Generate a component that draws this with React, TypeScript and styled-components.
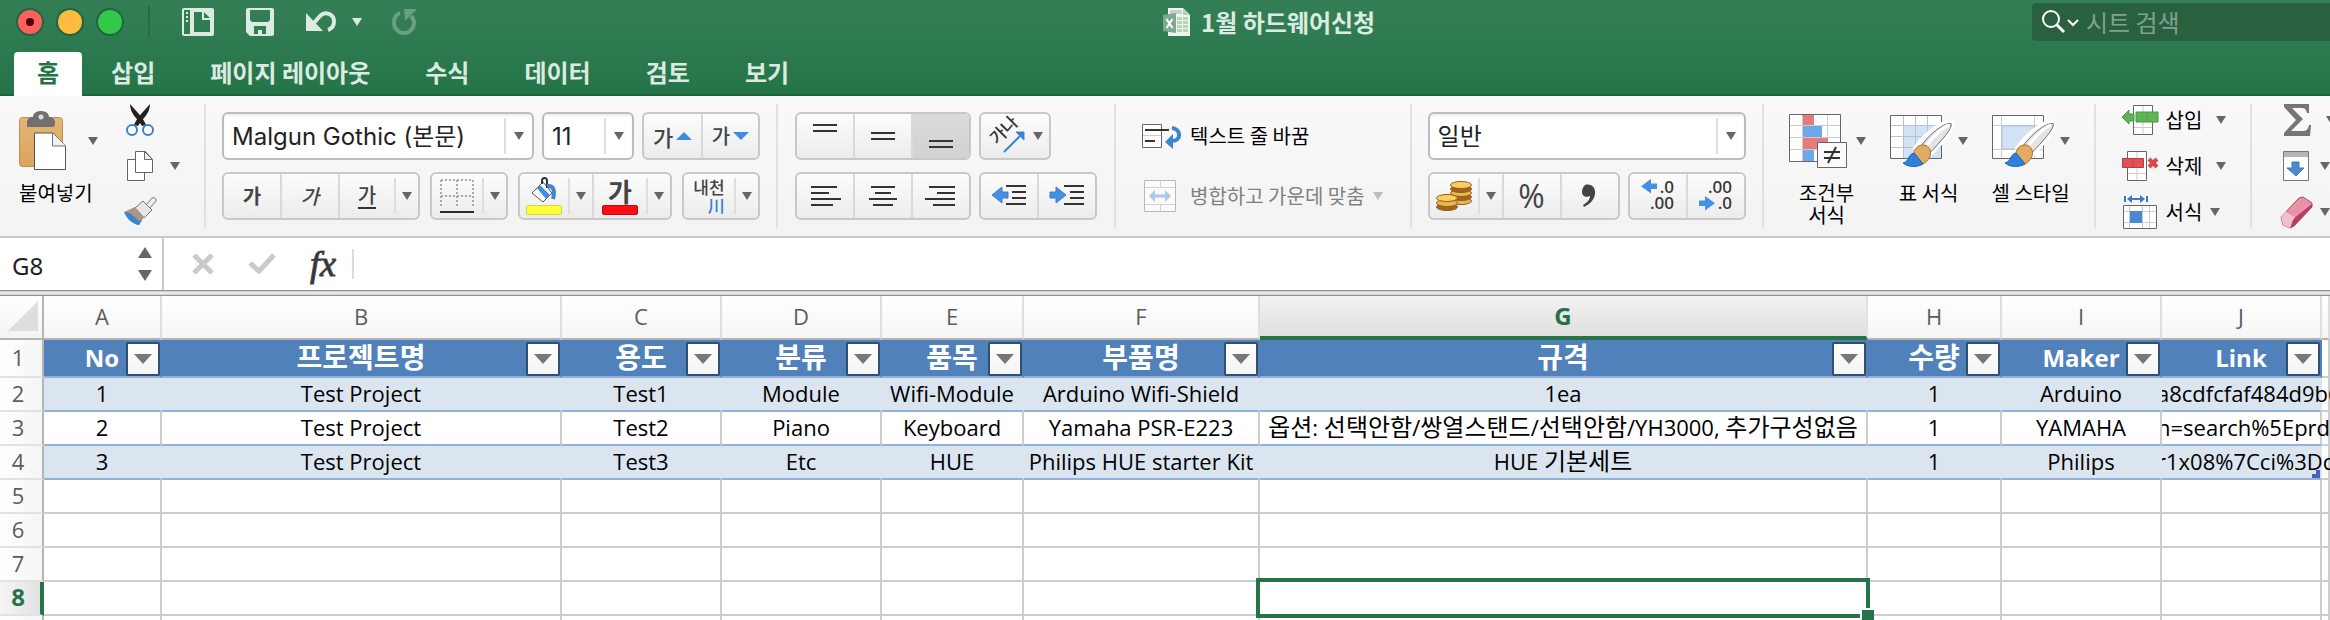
import React from "react";
import styled, { createGlobalStyle, css } from "styled-components";

const GlobalStyle = createGlobalStyle`
  *, *::before, *::after { box-sizing: border-box; }
  body { margin: 0; background: #fff; }
  button, input, select { font: inherit; color: inherit; margin: 0; }
  svg { flex-shrink: 0; overflow: visible; }
`;

const uiFont = `Inter, "Noto Sans CJK KR", sans-serif`;
const koFont = `"Noto Sans CJK KR", sans-serif`;
const cellFont = `"Open Sans", "Noto Sans CJK KR", sans-serif`;

/* ---------- window ---------- */

const Window = styled.div`
  display: flex;
  flex-direction: column;
  height: 100vh;
  overflow: hidden;
  font-family: ${koFont};
  color: #000;
`;

const plainButton = css`
  border: 0;
  padding: 0;
  background: none;
  display: flex;
  align-items: center;
  flex-shrink: 0;
  white-space: nowrap;
`;

const Row = styled.div<{ $gap?: number }>`
  display: flex;
  align-items: center;
  gap: ${(p) => p.$gap ?? 0}px;
`;

/* ---------- title bar ---------- */

const Header = styled.header`
  flex-shrink: 0;
  background: linear-gradient(#357f57, #257448);
  border-bottom: 2px solid #1f633c;
  color: #dcebe2;
`;

const TitleRow = styled.div`
  display: flex;
  align-items: center;
  height: 44px;
`;

const Tools = styled.div`
  flex: 1;
  display: flex;
  align-items: center;
  padding-left: 18px;
`;

const Light = styled.button<{ $color: string }>`
  ${plainButton}
  justify-content: center;
  width: 24px;
  height: 24px;
  margin-right: 16px;
  border-radius: 50%;
  background: ${(p) => p.$color};
  box-shadow: 0 0 0 2px rgba(20, 70, 40, 0.45);
`;

const LightDot = styled.span`
  width: 8px;
  height: 8px;
  border-radius: 50%;
  background: #4d0000;
`;

const TitleDivider = styled.span`
  width: 2px;
  height: 32px;
  margin: 0 32px 0 10px;
  background: #2a6b46;
`;

const ToolButton = styled.button<{ $after: number }>`
  ${plainButton}
  margin-right: ${(p) => p.$after}px;
`;

const DocTitle = styled.h1`
  display: flex;
  align-items: center;
  gap: 10px;
  width: 869px;
  margin: 0;
  font-size: 24px;
  line-height: 32px;
  font-weight: 700;
`;

const SearchBox = styled.label`
  display: flex;
  align-items: center;
  gap: 8px;
  width: 298px;
  height: 38px;
  padding-left: 10px;
  border-radius: 4px 0 0 4px;
  background: #29603f;
`;

const SearchInput = styled.input`
  flex: 1;
  min-width: 0;
  border: 0;
  padding: 0;
  background: none;
  font-size: 24px;
  line-height: 32px;
  &::placeholder { color: #7fa38d; opacity: 1; }
`;

const Tabs = styled.nav`
  display: flex;
  gap: 1px;
  height: 42px;
  margin-top: 8px;
  padding-left: 14px;
`;

const Tab = styled.button<{ $active?: boolean }>`
  ${plainButton}
  padding: 0 ${(p) => (p.$active ? 23 : 27)}px 3px;
  margin-right: ${(p) => (p.$active ? 1 : 0)}px;
  font-size: 24px;
  line-height: 36px;
  font-weight: 700;
  ${(p) =>
    p.$active &&
    css`
      height: 44px;
      padding-bottom: 5px;
      border-radius: 4px 4px 0 0;
      background: #fff;
      color: #257448;
    `}
`;

/* ---------- ribbon ---------- */

const Ribbon = styled.div`
  flex-shrink: 0;
  display: flex;
  overflow: hidden;
  height: 142px;
  padding: 8px 0;
  border-bottom: 2px solid #c9c9c9;
  background: linear-gradient(#f9f9f9, #f3f3f3);
`;

const Group = styled.div<{ $l: number; $r: number; $gap?: number }>`
  flex-shrink: 0;
  display: flex;
  gap: ${(p) => p.$gap ?? 0}px;
  padding: 0 ${(p) => p.$r}px 0 ${(p) => p.$l}px;
  border-right: 2px solid #e1e1e1;
  height: 124px;
  &:last-child { border-right: 0; }
`;

const Stack = styled.div`
  display: flex;
  flex-direction: column;
  gap: 12px;
  padding-top: 8px;
`;

const Triple = styled.div`
  display: flex;
  flex-direction: column;
  justify-content: space-between;
`;

const SmallCommand = styled.button<{ $gap?: number }>`
  ${plainButton}
  height: 32px;
  font-size: 20px;
  line-height: 24px;
  gap: ${(p) => p.$gap ?? 14}px;
`;

const IconLabel = styled.span`
  display: flex;
  align-items: center;
  gap: 8px;
`;

const BigCommand = styled.button<{ $w: number }>`
  ${plainButton}
  flex-direction: column;
  width: ${(p) => p.$w}px;
  padding-top: 6px;
  font-size: 20px;
  line-height: 22px;
`;

const BigArt = styled.span`
  display: flex;
  align-items: center;
  justify-content: space-between;
  width: 100%;
  height: 62px;
  margin-bottom: 10px;
`;

const PasteLabel = styled.span`
  align-self: flex-start;
`;

const WideCommand = styled.button<{ $off?: boolean }>`
  ${plainButton}
  height: 48px;
  font-size: 20px;
  line-height: 24px;
  gap: 8px;
  color: ${(p) => (p.$off ? "#808080" : "#000")};
`;

const Combo = styled.label<{ $w: number }>`
  display: flex;
  align-items: center;
  width: ${(p) => p.$w}px;
  height: 48px;
  padding-right: 8px;
  border: 2px solid #bdbdbd;
  border-radius: 6px;
  background: #fff;
  box-shadow: inset 0 2px 2px #eee;
`;

const Select = styled.select`
  appearance: none;
  flex: 1;
  min-width: 0;
  height: 36px;
  padding: 0 0 0 8px;
  border: 0;
  background: none;
  font-family: ${uiFont};
  font-size: 24px;
  color: #222;
`;

const Split = styled.span`
  width: 2px;
  height: 36px;
  background: #dedede;
`;

const ComboCaret = styled.span`
  display: flex;
  padding-left: 8px;
`;

const Buttons = styled.div`
  display: flex;
  height: 48px;
  border: 2px solid #c8c8c8;
  border-radius: 6px;
  background: linear-gradient(#fcfcfc, #ececec);
  overflow: hidden;
`;

const Btn = styled.button<{ $w: number; $on?: boolean }>`
  ${plainButton}
  justify-content: center;
  width: ${(p) => p.$w}px;
  font-size: 20px;
  line-height: 24px;
  font-weight: 700;
  color: #444;
  background: ${(p) => (p.$on ? "linear-gradient(#dadada, #d2d2d2)" : "none")};
  & + & { border-left: 2px solid #d9d9d9; }
`;

const BtnFace = styled.span`
  flex: 1;
  display: flex;
  justify-content: center;
`;

const BtnCaret = styled.span`
  display: flex;
  padding: 0 6px;
`;

const SizeGlyph = styled.span<{ $big?: boolean }>`
  font-size: ${(p) => (p.$big ? 22 : 20)}px;
  font-weight: 500;
`;

const Slanted = styled.span`
  font-weight: 500;
  font-style: italic;
`;

const Underlined = styled.span`
  font-weight: 500;
  border-bottom: 2px solid #333;
`;

const SwatchFace = styled.span`
  display: flex;
  flex-direction: column;
  align-items: center;
  font-size: 26px;
  line-height: 28px;
`;

const Swatch = styled.span<{ $color: string; $edge: string }>`
  width: 36px;
  height: 10px;
  border: 1px solid ${(p) => p.$edge};
  border-radius: 2px;
  background: ${(p) => p.$color};
`;

const Phonetic = styled.span`
  display: flex;
  flex-direction: column;
  font-size: 17px;
  line-height: 18px;
  font-weight: 500;
  text-align: right;
`;

const Blue = styled.span`
  color: #2f7fd4;
`;

const Percent = styled.span`
  font-family: "Open Sans", sans-serif;
  font-size: 32px;
  font-weight: 400;
`;

const Comma = styled.span`
  display: flex;
`;

/* ---------- formula bar ---------- */

const FormulaBar = styled.div`
  flex-shrink: 0;
  display: flex;
  align-items: center;
  height: 52px;
  background: #fff;
`;

const NameBox = styled.div`
  display: flex;
  align-items: center;
  width: 164px;
  height: 52px;
  padding: 0 10px 0 12px;
  border-right: 2px solid #c9c9c9;
`;

const BarInput = styled.input`
  flex: 1;
  min-width: 0;
  height: 40px;
  padding: 2px 0 0;
  border: 0;
  background: none;
  font-family: "Noto Sans", sans-serif;
  font-size: 24px;
  color: #222;
  outline: none;
`;

const Stepper = styled.div`
  display: flex;
  flex-direction: column;
  gap: 12px;
`;

const BarButton = styled.button<{ $before: number }>`
  ${plainButton}
  margin-left: ${(p) => p.$before}px;
`;

const Fx = styled.span`
  font-family: "Liberation Serif", serif;
  font-style: italic;
  font-weight: 400;
  font-size: 36px;
  line-height: 36px;
  color: #333;
  -webkit-text-stroke: 1px #444;
`;

const BarDivider = styled.span`
  width: 2px;
  height: 30px;
  margin: 0 12px 0 16px;
  background: #dcdcdc;
`;

const SheetEdge = styled.div`
  flex-shrink: 0;
  height: 6px;
  border-top: 1px solid #949494;
  border-bottom: 1px solid #949494;
  background: linear-gradient(#c4c4c4, #f4f4f4, #c8c8c8);
`;

/* ---------- sheet ---------- */

const SheetArea = styled.main`
  flex: 1;
  min-height: 0;
  overflow: hidden;
`;

const Sheet = styled.table`
  width: 100%;
  table-layout: fixed;
  border-collapse: separate;
  border-spacing: 0;
  font-family: ${cellFont};
  font-size: 22px;
  line-height: 30px;
  white-space: nowrap;
`;

const Corner = styled.td`
  height: 44px;
  padding: 4px 4px 0 8px;
  border-right: 2px solid #b4b4b4;
  border-bottom: 2px solid #b4b4b4;
  background: linear-gradient(#fff, #f3f3f3);
`;

const ColHead = styled.th<{ $on: boolean }>`
  height: 44px;
  padding: 0 0 2px;
  border-right: 2px solid ${(p) => (p.$on ? "#e2e2e2" : "#dedede")};
  border-bottom: 2px solid #b4b4b4;
  background: linear-gradient(#fff, #f5f5f5);
  font-weight: 400;
  color: #5c5c5c;
  ${(p) =>
    p.$on &&
    css`
      padding-bottom: 0;
      border-bottom: 4px solid #257448;
      background: linear-gradient(#f3f3f3, #dfdfdf);
      font-size: 24px;
      font-weight: 700;
      color: #257448;
    `}
`;

const RowHead = styled.th<{ $on: boolean }>`
  padding: 0 6px 2px 0;
  border-right: 2px solid #b4b4b4;
  border-bottom: 2px solid #e2e2e2;
  background: linear-gradient(90deg, #fff, #f5f5f5);
  font-weight: 400;
  color: #5c5c5c;
  ${(p) =>
    p.$on &&
    css`
      padding-right: 4px;
      border-right: 4px solid #257448;
      background: linear-gradient(90deg, #f5f5f5, #e2e2e2);
      font-size: 24px;
      font-weight: 700;
      color: #257448;
    `}
`;

type Tone = "head" | "band" | "plain" | "empty";
const fills: Record<Tone, string> = {
  head: "#5081bb",
  band: "#dbe5f0",
  plain: "#fff",
  empty: "#fff",
};

const Cell = styled.td<{ $tone: Tone }>`
  position: relative;
  height: ${(p) => (p.$tone === "head" ? 38 : 34)}px;
  padding: 0 0 2px;
  text-align: center;
  background: ${(p) => fills[p.$tone]};
  border-right: 2px solid ${(p) => (p.$tone === "plain" || p.$tone === "empty" ? "#cdcdcd" : fills[p.$tone])};
  border-bottom: 2px solid ${(p) => (p.$tone === "empty" ? "#cdcdcd" : "#93b2d9")};
  ${(p) =>
    p.$tone === "head" &&
    css`
      padding: 0;
      font-size: 24px;
      font-weight: 700;
      color: #fff;
    `}
`;

/* Hangul runs are set slightly larger than the Latin beside them */
const Hangul = styled.span<{ $head?: boolean }>`
  font-family: ${koFont};
  font-size: ${(p) => (p.$head ? 28 : 24)}px;
  line-height: 28px;
`;

const Spill = styled.div`
  overflow: hidden;
  position: relative;
  z-index: 1;
  width: 168px;
  text-align: left;
  text-indent: -5px;
`;

const FilterButton = styled.button`
  ${plainButton}
  position: absolute;
  right: 0;
  top: 2px;
  justify-content: center;
  width: 34px;
  height: 34px;
  border: 2px solid #30506f;
  border-radius: 2px;
  background: linear-gradient(#fff, #f3f3f3);
`;

const TableCorner = styled.svg`
  position: absolute;
  right: 0;
  bottom: 0;
  z-index: 2;
`;

const Selection = styled.div`
  position: absolute;
  inset: -4px;
  z-index: 3;
  border: 4px solid #257448;
`;

const FillHandle = styled.span`
  position: absolute;
  right: -8px;
  bottom: -8px;
  width: 14px;
  height: 14px;
  border: 2px solid #fff;
  border-right: 0;
  background: #257448;
`;

/* ---------- drawings ---------- */

const Caret = ({ color = "#666", w = 10, h = 8, up = false }: { color?: string; w?: number; h?: number; up?: boolean }) => (
  <svg width={w} height={h} viewBox="0 0 10 8" preserveAspectRatio="none">
    <path d={up ? "M0 8h10L5 0z" : "M0 0h10L5 8z"} fill={color} />
  </svg>
);

const PaneIcon = () => (
  <svg width="32" height="28" fill="#dcebe2">
    <path fillRule="evenodd" d="M2 0h28a2 2 0 0 1 2 2v24a2 2 0 0 1-2 2H2a2 2 0 0 1-2-2V2a2 2 0 0 1 2-2zM2 2v24h6V2zM12 4v20h16V12h-8V4zM22 4v6h6z" />
    <path d="M4 4h2v2H4zM4 8h2v2H4zM4 12h2v2H4z" />
  </svg>
);

const SaveIcon = () => (
  <svg width="28" height="28">
    <path fill="#dcebe2" fillRule="evenodd" d="M2 0h24a2 2 0 0 1 2 2v24a2 2 0 0 1-2 2H4l-4-4V2a2 2 0 0 1 2-2zM4 2v10l2 2h16l2-2V2zM8 18v8h4v-4h4v4h4v-8z" />
  </svg>
);

const UndoIcon = () => (
  <svg width="30" height="22" fill="none">
    <path d="M0 2v18h17z" fill="#dcebe2" />
    <path d="M7 13L14 5C20-1 28 4 28 10c0 5-3 8-6 9" stroke="#dcebe2" strokeWidth="4" />
  </svg>
);

const RedoIcon = () => (
  <svg width="26" height="28" fill="none">
    <path d="M8 5C3 7 2 11 2 15a10 10 0 0 0 20 0c0-3-1-5-3-7" stroke="#6b9f82" strokeWidth="4" />
    <path d="M12 1h13L13 13z" fill="#6b9f82" />
  </svg>
);

const BookIcon = () => (
  <svg width="28" height="28">
    <path d="M5 0h15l7 7v21H5z" fill="#eef5f0" />
    <path d="M7 2h12v4H7z" fill="#c9cfca" />
    <path d="M20 0v7h7z" fill="#b8cdbf" />
    <path d="M14 9h5v3h-5zM20 9h5v3h-5zM14 13h5v3h-5zM20 13h5v3h-5zM14 17h5v3h-5zM20 17h5v3h-5zM14 21h5v3h-5zM20 21h5v3h-5z" fill="#b5d8b4" />
    <path d="M0 7l13-2v20L0 23z" fill="#7daa8f" />
    <path d="M3.500 11l6 9M9.500 11l-6 9" stroke="#fff" strokeWidth="2" />
  </svg>
);

const SearchIcon = () => (
  <svg width="36" height="24" fill="none" stroke="#fff" strokeWidth="2">
    <circle cx="9" cy="9" r="8" />
    <path d="M15 15l7 7" strokeWidth="3" />
    <path d="M26 10l5 5 5-5" />
  </svg>
);

const PasteIcon = () => (
  <svg width="48" height="60">
    <defs>
      <linearGradient id="board" x2="0" y2="1">
        <stop stopColor="#e4b573" />
        <stop offset="1" stopColor="#d9a55f" />
      </linearGradient>
    </defs>
    <rect x="0.500" y="6.500" width="43" height="49" rx="3" fill="url(#board)" stroke="#c08f52" />
    <path d="M8 16v-5c0-3 3-5 6-5 0-4 4-6 8-6s8 2 8 6c3 0 6 2 6 5v2c0 2-1 3-3 3z" fill="#707070" />
    <circle cx="22" cy="6" r="2.500" fill="#e9dcc6" />
    <path d="M15.500 22H34l12.500 13v23.500h-31z" fill="#fff" stroke="#555" />
    <path d="M33.500 22v13h13" fill="#f0f0f0" stroke="#777" />
  </svg>
);

const CutIcon = () => (
  <svg width="32" height="32">
    <path d="M6 0c5 6 13 13 16 21l-4 1C14 15 6 10 6 0z" fill="#222" />
    <path d="M26 0c-5 6-13 13-16 21l4 1C18 15 26 10 26 0z" fill="#222" />
    <circle cx="8" cy="26" r="5" fill="#fff" stroke="#3a80cf" strokeWidth="2" />
    <circle cx="24" cy="26" r="5" fill="#fff" stroke="#3a80cf" strokeWidth="2" />
  </svg>
);

const CopyIcon = () => (
  <svg width="32" height="32" stroke="#666" fill="#fff">
    <path d="M3.500 9.500h17v21h-17z" />
    <path d="M11.500 1.500h10l7 8v13h-17z" />
    <path d="M20.500 1.500v8h8z" fill="#eee" />
  </svg>
);

const FormatBrushIcon = () => (
  <svg width="32" height="32">
    <path d="M22 9l6-7c3-1 5 1 4 3l-7 8z" fill="#eee" stroke="#777" />
    <path d="M11 12l8-7 9 9-8 8z" fill="#e6e6e6" stroke="#777" />
    <path d="M0 16l11-5 9 10-5 8C9 28 4 23 0 16z" fill="#ab9682" />
    <path d="M0 16l6 1 9 8 3-1-3 5C8 28 3 23 0 16z" fill="#3b82cf" />
  </svg>
);

const BordersIcon = () => (
  <svg width="34" height="34">
    <path d="M1 1h32M1 17h32M1 1v28M17 1v28M33 1v28" stroke="#aaa" strokeWidth="2" strokeDasharray="2 2" />
    <path d="M0 33h34" stroke="#2b2b2b" strokeWidth="2" />
  </svg>
);

const BucketIcon = () => (
  <svg width="26" height="28">
    <path d="M1 16L12 5l9 11-9 9z" fill="#fff" stroke="#555" />
    <path d="M6 11l9 11 4-4L9 8z" fill="#3f8ee0" />
    <path d="M11 7V4c0-4 5-4 5 0v7" fill="none" stroke="#333" strokeWidth="2" />
    <path d="M16 9c7-1 8 5 6 13" fill="none" stroke="#3b85d3" strokeWidth="4" />
  </svg>
);

const Lines = ({ rows }: { rows: [number, number, number][] }) => (
  <svg width="36" height="40" stroke="#333" strokeWidth="2">
    {rows.map(([x, y, w]) => (
      <path key={y} d={`M${x} ${y}h${w}`} />
    ))}
  </svg>
);

const OrientationIcon = () => (
  <svg width="40" height="44">
    <text x="-16" y="6" transform="translate(17 16) rotate(-45)" fontSize="17" fontWeight="500" fill="#333">가나</text>
    <path d="M17 38l16-16" stroke="#3b85d3" strokeWidth="2" />
    <path d="M29 18h8v8z" fill="#3b85d3" stroke="#3b85d3" />
  </svg>
);

const arrowRight = "M0 5h6V0l10 8-10 8v-5H0z";

const IndentIcon = ({ out }: { out?: boolean }) => (
  <svg width="34" height="24">
    <path d={arrowRight} fill="#4590e2" stroke="#3b7fc9" transform={out ? "translate(16 3) scale(-1 1)" : "translate(0 3)"} />
    <path d="M14 2h20M20 8h14M20 14h14M14 20h20" stroke="#333" strokeWidth="2" />
  </svg>
);

const WrapIcon = () => (
  <svg width="40" height="28">
    <path d="M.5 2.500h19v23h-19z" fill="#fff" stroke="#666" />
    <path d="M1 13.500h18" stroke="#ccc" />
    <path d="M3 8h24M3 19h10" stroke="#333" strokeWidth="2" />
    <path d="M30 6c9 1 10 13 0 13" stroke="#3b85d3" strokeWidth="4" fill="none" />
    <path d="M31 12v15l-8-7z" fill="#3b85d3" />
  </svg>
);

const MergeIcon = () => (
  <svg width="40" height="32">
    <path d="M2.500.5h31v31h-31z" fill="#fafafa" stroke="#b9b9b9" />
    <path d="M3 7.500h30M3 24.500h30M18.500 1v6M18.500 25v6" stroke="#d5d5d5" />
    <path d="M10 16h16" stroke="#a9c9ec" strokeWidth="3" />
    <path d="M13 10v12l-6-6zM23 10v12l6-6z" fill="#a9c9ec" />
  </svg>
);

const coins = [[25, 20], [25, 16], [25, 12], [25, 8], [25, 4], [11, 26], [11, 22], [11, 17]];

const CoinsIcon = () => (
  <svg width="36" height="30">
    {coins.map(([x, y], i) => (
      <ellipse key={i} cx={x} cy={y} rx="10.500" ry="3.500" fill={i === 4 || i === 7 ? "#fbd063" : i % 2 ? "#a0641e" : "#e8b84c"} stroke="#94601a" />
    ))}
  </svg>
);

const CommaIcon = () => (
  <svg width="16" height="22">
    <path d="M3 0c7-2 11 4 10 9-1 6-5 10-11 13l-1-2c5-3 7-6 7-9-4 2-8 0-8-4 0-3 1-5 3-7z" fill="#444" />
  </svg>
);

const DecimalIcon = ({ more }: { more?: boolean }) => (
  <svg width="36" height="36" fontFamily="Noto Sans, sans-serif" fontSize="17" fontWeight="500" fill="#333">
    <text x="34" y="15" textAnchor="end">{more ? ".0" : ".00"}</text>
    <text x="34" y="31" textAnchor="end">{more ? ".00" : ".0"}</text>
    <path d={arrowRight} fill="#4590e2" transform={more ? "translate(17 1) scale(-1 .9)" : "translate(1 18) scale(1 .9)"} />
  </svg>
);

const ConditionalIcon = () => (
  <svg width="60" height="56">
    <path d="M1.500 1.500h51v47h-51z" fill="#fff" stroke="#666" />
    <path d="M2 12.500h50M2 24.500h50M2 36.500h50M14.500 2v46M39.500 2v46" stroke="#ccc" />
    <path d="M15 2h11v10H15zM15 25h25v11H15z" fill="#e47c7c" />
    <path d="M15 13h19v11H15zM15 37h11v11H15z" fill="#6da8e8" />
    <path d="M29.500 29.500h29v25h-29z" fill="#fafafa" stroke="#666" />
    <path d="M36 39h16M36 45h16M48 34l-8 16" stroke="#333" strokeWidth="2" />
  </svg>
);

const PaintBrush = () => (
  <g>
    <path d="M26 34C34 22 50 8 62 8c2 3-6 16-23 33z" fill="#fff" stroke="#fff" strokeWidth="5" />
    <path d="M31 32C38 22 52 9 61 9.500c2 3-6 14-21 29z" fill="#e3e3e3" stroke="#6b6b6b" />
    <path d="M37 31C44 22 53 13 59 11" stroke="#fff" strokeWidth="3" fill="none" />
    <path d="M24 39c1-9 13-11 16-3 2 6-2 11-7 14z" fill="#e2ab63" stroke="#a3722f" />
    <path d="M13 49c6-1 5-9 11-10l9 11c-5 3-14 4-20-1z" fill="#2f80dc" stroke="#2563b0" />
  </g>
);

const TableStyleIcon = () => (
  <svg width="64" height="54">
    <path d="M.5 1.500h51v43H.5z" fill="#fff" stroke="#666" />
    <path d="M14 12h37v32H14z" fill="#d3e3f5" />
    <path d="M1 11.500h50M1 22.500h50M1 33.500h50M13.500 2v42M25.500 2v42M37.500 2v42" stroke="#b9c3cf" />
    <PaintBrush />
  </svg>
);

const CellStyleIcon = () => (
  <svg width="64" height="54">
    <path d="M.5 1.500h51v43H.5z" fill="#fff" stroke="#666" />
    <path d="M1 11.500h50M1 35.500h50M9.500 2v42M42.500 2v42" stroke="#ccc" />
    <path d="M10 12h32v23H10z" fill="#d3e3f5" stroke="#a9c2de" />
    <PaintBrush />
  </svg>
);

const InsertIcon = () => (
  <svg width="36" height="32">
    <path d="M11.500 1.500h19v29h-19z" fill="#fff" stroke="#666" />
    <path d="M21 2v28M12 23.500h18" stroke="#ccc" />
    <path d="M0 13l7-7v4h5v7H7v3z" fill="#5fb455" stroke="#4c9a44" />
    <path d="M14 8h22v10H14z" fill="#5fb455" stroke="#4c9a44" />
    <path d="M25 8v10" stroke="#4c9a44" />
  </svg>
);

const DeleteIcon = () => (
  <svg width="36" height="32">
    <path d="M5.500 1.500h19v29h-19z" fill="#fff" stroke="#666" />
    <path d="M15 2v28M6 23.500h18" stroke="#ccc" />
    <path d="M.5 8.500h21v9H.5z" fill="#df5457" stroke="#b93d40" />
    <path d="M11 9v9" stroke="#b93d40" />
    <path d="M27 9l8 8M35 9l-8 8" stroke="#d9474b" strokeWidth="4" />
  </svg>
);

const FormatIcon = () => (
  <svg width="36" height="34">
    <path d="M1.500 10.500h33v23h-33z" fill="#fff" stroke="#666" />
    <path d="M2 16.500h32M2 27.500h32M7.500 11v22M20.500 11v22M27.500 11v22" stroke="#ccc" />
    <path d="M8 16h12v12H8z" fill="#4a88cf" />
    <path d="M3 1v6M25 1v6" stroke="#3f79bd" strokeWidth="2" />
    <path d="M8 4h12" stroke="#3f79bd" strokeWidth="2" />
    <path d="M10 0v8L5 4zM18 0v8l5-4z" fill="#3f79bd" />
  </svg>
);

const SigmaIcon = () => (
  <svg width="34" height="32">
    <path d="M4 0h25v9h-2c-1-4-2-5-6-5h-9l11 11L11 27h11c5 0 6-2 7-6h2l-1 11H4v-3l12-13L4 3z" fill="#757575" />
  </svg>
);

const FillDownIcon = () => (
  <svg width="34" height="32">
    <path d="M3.500 1.500h25v29h-25z" fill="#fff" stroke="#777" />
    <path d="M4 2h24v5H4z" fill="#b5b5b5" />
    <path d="M12 12h7v6h5l-8 8-9-8h5z" fill="#4a88cf" stroke="#3f79bd" />
  </svg>
);

const EraserIcon = () => (
  <svg width="34" height="34">
    <path d="M1 22L19 3l4-1 9 6v4L14 31l-4 2-7-3z" fill="#ea93a8" stroke="#a84a63" />
    <path d="M10 33l3-9L32 9v3L14 31z" fill="#b5405f" />
    <path d="M1 22l5-6 10 5-3 4-3 8-7-3z" fill="#f4bfcd" />
    <path d="M6 16l10 6" stroke="#d9798f" />
  </svg>
);

/* ---------- data ---------- */

const tabs = ["홈", "삽입", "페이지 레이아웃", "수식", "데이터", "검토", "보기"];
const columns = [
  { id: "A", w: 118 },
  { id: "B", w: 400 },
  { id: "C", w: 160 },
  { id: "D", w: 160 },
  { id: "E", w: 142 },
  { id: "F", w: 236 },
  { id: "G", w: 608 },
  { id: "H", w: 134 },
  { id: "I", w: 160 },
  { id: "J", w: 160 },
];
const records = [
  ["No", "프로젝트명", "용도", "분류", "품목", "부품명", "규격", "수량", "Maker", "Link"],
  ["1", "Test Project", "Test1", "Module", "Wifi-Module", "Arduino Wifi-Shield", "1ea", "1", "Arduino", "a8cdfcfaf484d9b6"],
  ["2", "Test Project", "Test2", "Piano", "Keyboard", "Yamaha PSR-E223", "옵션: 선택안함/쌍열스탠드/선택안함/YH3000, 추가구성없음", "1", "YAMAHA", "n=search%5Eprd4"],
  ["3", "Test Project", "Test3", "Etc", "HUE", "Philips HUE starter Kit", "HUE 기본세트", "1", "Philips", "r1x08%7Cci%3Dd"],
];
const tones: Tone[] = ["head", "band", "plain", "band"];

const CellText = ({ text, head }: { text: string; head?: boolean }) => (
  <>
    {text.split(/([가-힣]+)/).map((run, i) =>
      i % 2 ? <Hangul key={i} $head={head}>{run}</Hangul> : run
    )}
  </>
);

const SplitBtn = ({ w, label, children }: { w: number; label: string; children: React.ReactNode }) => (
  <Btn $w={w} aria-label={label}>
    <BtnFace>{children}</BtnFace>
    <Split />
    <BtnCaret><Caret /></BtnCaret>
  </Btn>
);

const ComboBox = ({ w, label, value }: { w: number; label: string; value: string }) => (
  <Combo $w={w}>
    <Select aria-label={label}><option>{value}</option></Select>
    <Split />
    <ComboCaret><Caret /></ComboCaret>
  </Combo>
);

export default function App() {
  return (
    <Window>
      <GlobalStyle />
      <Header>
        <TitleRow>
          <Tools>
            <Light $color="#fc605c" aria-label="닫기"><LightDot /></Light>
            <Light $color="#fdbc40" aria-label="최소화" />
            <Light $color="#34c84a" aria-label="확대" />
            <TitleDivider />
            <ToolButton $after={32} aria-label="갤러리"><PaneIcon /></ToolButton>
            <ToolButton $after={32} aria-label="저장"><SaveIcon /></ToolButton>
            <ToolButton $after={16} aria-label="실행 취소"><UndoIcon /></ToolButton>
            <ToolButton $after={30} aria-label="실행 취소 목록"><Caret color="#dcebe2" /></ToolButton>
            <ToolButton $after={0} aria-label="다시 실행"><RedoIcon /></ToolButton>
          </Tools>
          <DocTitle><BookIcon />1월 하드웨어신청</DocTitle>
          <SearchBox>
            <SearchIcon />
            <SearchInput placeholder="시트 검색" aria-label="시트 검색" />
          </SearchBox>
        </TitleRow>
        <Tabs>
          {tabs.map((t, i) => <Tab key={t} $active={i === 0}>{t}</Tab>)}
        </Tabs>
      </Header>

      <Ribbon>
        <Group $l={19} $r={24} $gap={26}>
          <BigCommand $w={79}>
            <BigArt><PasteIcon /><Caret /></BigArt>
            <PasteLabel>붙여넣기</PasteLabel>
          </BigCommand>
          <Triple>
            <SmallCommand aria-label="잘라내기"><CutIcon /></SmallCommand>
            <SmallCommand aria-label="복사"><CopyIcon /><Caret /></SmallCommand>
            <SmallCommand aria-label="서식 복사"><FormatBrushIcon /></SmallCommand>
          </Triple>
        </Group>

        <Group $l={16} $r={16}>
          <Stack>
            <Row $gap={8}>
              <ComboBox w={312} label="글꼴" value="Malgun Gothic (본문)" />
              <ComboBox w={92} label="글꼴 크기" value="11" />
              <Buttons>
                <Btn $w={57} aria-label="글꼴 크게"><Row $gap={3}><SizeGlyph $big>가</SizeGlyph><Caret color="#3f8be0" w={16} up /></Row></Btn>
                <Btn $w={57} aria-label="글꼴 작게"><Row $gap={3}><SizeGlyph>가</SizeGlyph><Caret color="#3f8be0" w={16} /></Row></Btn>
              </Buttons>
            </Row>
            <Row $gap={10}>
              <Buttons>
                <Btn $w={56}>가</Btn>
                <Btn $w={58}><Slanted>가</Slanted></Btn>
                <SplitBtn w={80} label="밑줄"><Underlined>가</Underlined></SplitBtn>
              </Buttons>
              <Buttons>
                <SplitBtn w={74} label="테두리"><BordersIcon /></SplitBtn>
              </Buttons>
              <Buttons>
                <SplitBtn w={72} label="채우기 색">
                  <SwatchFace><BucketIcon /><Swatch $color="#ffff37" $edge="#d8d43a" /></SwatchFace>
                </SplitBtn>
                <SplitBtn w={78} label="글꼴 색">
                  <SwatchFace>가<Swatch $color="#ff0b16" $edge="#c40812" /></SwatchFace>
                </SplitBtn>
              </Buttons>
              <Buttons>
                <SplitBtn w={74} label="윗주">
                  <Phonetic>내천<Blue>川</Blue></Phonetic>
                </SplitBtn>
              </Buttons>
            </Row>
          </Stack>
        </Group>

        <Group $l={17} $r={17}>
          <Stack>
            <Row $gap={8}>
              <Buttons>
                <Btn $w={56} aria-label="위쪽 맞춤"><Lines rows={[[6, 9, 24], [6, 15, 24]]} /></Btn>
                <Btn $w={58} aria-label="가운데 맞춤"><Lines rows={[[6, 17, 24], [6, 23, 24]]} /></Btn>
                <Btn $w={58} $on aria-label="아래쪽 맞춤"><Lines rows={[[6, 25, 24], [6, 31, 24]]} /></Btn>
              </Buttons>
              <Buttons>
                <Btn $w={68} aria-label="방향"><Row $gap={6}><OrientationIcon /><Caret /></Row></Btn>
              </Buttons>
            </Row>
            <Row $gap={8}>
              <Buttons>
                <Btn $w={56} aria-label="왼쪽 맞춤"><Lines rows={[[4, 11, 26], [4, 17, 18], [4, 23, 30], [4, 29, 22]]} /></Btn>
                <Btn $w={58} aria-label="가운데 맞춤"><Lines rows={[[6, 11, 24], [10, 17, 16], [4, 23, 28], [8, 29, 20]]} /></Btn>
                <Btn $w={58} aria-label="오른쪽 맞춤"><Lines rows={[[6, 11, 26], [14, 17, 18], [2, 23, 30], [10, 29, 22]]} /></Btn>
              </Buttons>
              <Buttons>
                <Btn $w={56} aria-label="내어쓰기"><IndentIcon out /></Btn>
                <Btn $w={58} aria-label="들여쓰기"><IndentIcon /></Btn>
              </Buttons>
            </Row>
          </Stack>
        </Group>

        <Group $l={26} $r={27}>
          <Stack>
            <WideCommand><WrapIcon />텍스트 줄 바꿈</WideCommand>
            <WideCommand $off disabled><MergeIcon />병합하고 가운데 맞춤 <Caret color="#bdbdbd" /></WideCommand>
          </Stack>
        </Group>

        <Group $l={16} $r={16}>
          <Stack>
            <ComboBox w={318} label="표시 형식" value="일반" />
            <Row $gap={8}>
              <Buttons>
                <SplitBtn w={72} label="통화"><CoinsIcon /></SplitBtn>
                <Btn $w={58}><Percent>%</Percent></Btn>
                <Btn $w={58} aria-label="쉼표 스타일"><Comma><CommaIcon /></Comma></Btn>
              </Buttons>
              <Buttons>
                <Btn $w={56} aria-label="자릿수 늘림"><DecimalIcon more /></Btn>
                <Btn $w={58} aria-label="자릿수 줄임"><DecimalIcon /></Btn>
              </Buttons>
            </Row>
          </Stack>
        </Group>

        <Group $l={24} $r={24} $gap={24}>
          <BigCommand $w={78}>
            <BigArt><ConditionalIcon /><Caret /></BigArt>
            <span>조건부<br />서식</span>
          </BigCommand>
          <BigCommand $w={78}>
            <BigArt><TableStyleIcon /><Caret /></BigArt>
            표 서식
          </BigCommand>
          <BigCommand $w={78}>
            <BigArt><CellStyleIcon /><Caret /></BigArt>
            셀 스타일
          </BigCommand>
        </Group>

        <Group $l={26} $r={24}>
          <Triple>
            <SmallCommand><IconLabel><InsertIcon />삽입</IconLabel><Caret /></SmallCommand>
            <SmallCommand><IconLabel><DeleteIcon />삭제</IconLabel><Caret /></SmallCommand>
            <SmallCommand $gap={8}><IconLabel><FormatIcon />서식</IconLabel><Caret /></SmallCommand>
          </Triple>
        </Group>

        <Group $l={28} $r={0}>
          <Triple>
            <SmallCommand $gap={12} aria-label="합계"><SigmaIcon /><Caret /></SmallCommand>
            <SmallCommand $gap={6} aria-label="채우기"><FillDownIcon /><Caret /></SmallCommand>
            <SmallCommand $gap={6} aria-label="지우기"><EraserIcon /><Caret /></SmallCommand>
          </Triple>
        </Group>
      </Ribbon>

      <FormulaBar>
        <NameBox>
          <BarInput defaultValue="G8" aria-label="이름 상자" />
          <Stepper>
            <Caret w={14} h={11} up />
            <Caret w={14} h={11} />
          </Stepper>
        </NameBox>
        <BarButton $before={28} aria-label="취소">
          <svg width="22" height="22" stroke="#cacaca" strokeWidth="5"><path d="M2 2l18 18M20 2L2 20" /></svg>
        </BarButton>
        <BarButton $before={34} aria-label="입력">
          <svg width="28" height="22" stroke="#cacaca" strokeWidth="5" fill="none"><path d="M2 10l9 8L26 2" /></svg>
        </BarButton>
        <BarButton $before={34} aria-label="함수 삽입"><Fx>fx</Fx></BarButton>
        <BarDivider />
        <BarInput aria-label="수식" />
      </FormulaBar>
      <SheetEdge />

      <SheetArea>
        <Sheet>
          <colgroup>
            <col style={{ width: 44 }} />
            {columns.map((c) => <col key={c.id} style={{ width: c.w }} />)}
            <col />
          </colgroup>
          <thead>
            <tr>
              <Corner><svg width="30" height="30"><path d="M30 0v30H0z" fill="#dedede" /></svg></Corner>
              {columns.map((c) => <ColHead key={c.id} $on={c.id === "G"}>{c.id}</ColHead>)}
              <ColHead $on={false} />
            </tr>
          </thead>
          <tbody>
            {Array.from({ length: 9 }, (_, r) => {
              const tone = tones[r] ?? "empty";
              return (
                <tr key={r}>
                  <RowHead $on={r === 7}>{r + 1}</RowHead>
                  {columns.map((c, i) => {
                    const text = records[r]?.[i] ?? "";
                    return (
                      <Cell key={c.id} $tone={tone}>
                        {c.id === "J" && r > 0 && r < 4 ? <Spill>{text}</Spill> : <CellText text={text} head={r === 0} />}
                        {r === 0 && <FilterButton aria-label={`${text} 필터`}><Caret color="#777" w={18} h={10} /></FilterButton>}
                        {c.id === "J" && r === 3 && (
                          <TableCorner width="8" height="8"><path d="M4 0h4v8H0V4h4z" fill="#4a5fb5" /></TableCorner>
                        )}
                        {c.id === "G" && r === 7 && <Selection><FillHandle /></Selection>}
                      </Cell>
                    );
                  })}
                  <Cell $tone="empty" />
                </tr>
              );
            })}
          </tbody>
        </Sheet>
      </SheetArea>
    </Window>
  );
}
